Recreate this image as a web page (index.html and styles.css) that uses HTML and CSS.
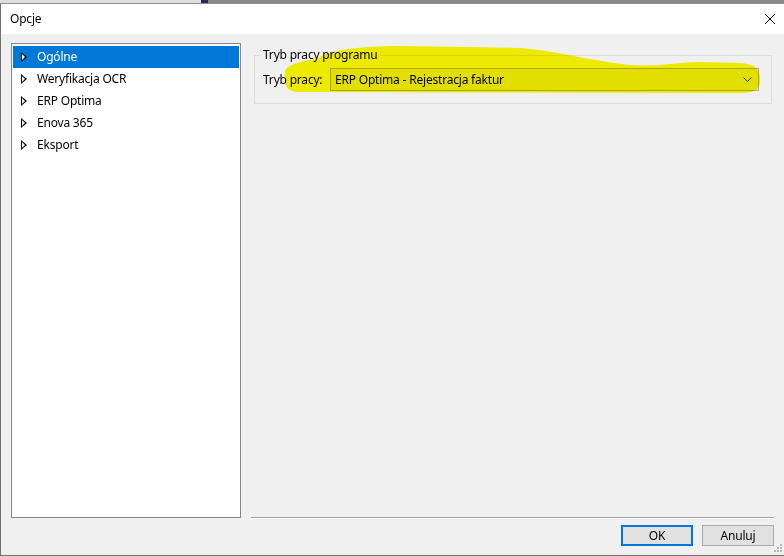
FILE: index.html
```html
<!DOCTYPE html>
<html lang="pl">
<head>
    <meta charset="UTF-8">
    <title>Opcje</title>
    <link rel="stylesheet" href="styles.css">
</head>
<body>
    <div class="desktop-strip">
        <div class="strip-light"></div>
        <div class="strip-dark"></div>
        <div class="strip-gray"></div>
    </div>

    <div class="dialog">
        <div class="titlebar">
            <span class="title">Opcje</span>
            <svg class="close" width="12" height="12" viewBox="0 0 12 12">
                <path d="M1 1 L11 11 M11 1 L1 11" stroke="#000" stroke-width="1" fill="none"/>
            </svg>
        </div>

        <div class="content">
            <div class="main">
                <ul class="tree">
                    <li class="selected"><span class="arrow"></span>Ogólne</li>
                    <li><span class="arrow"></span>Weryfikacja OCR</li>
                    <li><span class="arrow"></span>ERP Optima</li>
                    <li><span class="arrow"></span>Enova 365</li>
                    <li><span class="arrow"></span>Eksport</li>
                </ul>

                <div class="panel">
                    <fieldset class="group">
                        <legend>Tryb pracy programu</legend>
                        <div class="field">
                            <label for="mode">Tryb pracy:</label>
                            <div class="combo" id="mode">
                                <span>ERP Optima - Rejestracja faktur</span>
                                <svg width="9" height="6" viewBox="0 0 9 6">
                                    <path d="M0.5 0.5 L4.5 4.5 L8.5 0.5" stroke="#333" stroke-width="1" fill="none"/>
                                </svg>
                            </div>
                        </div>
                    </fieldset>
                    <div class="separator"></div>
                </div>
            </div>

            <div class="buttons">
                <button class="default">OK</button>
                <button>Anuluj</button>
            </div>
        </div>
    </div>

    <!-- grip -->
    <svg class="grip" width="9" height="9" viewBox="0 0 9 9">
        <g fill="#b8b8b8">
            <rect x="6" y="0" width="2" height="2"/>
            <rect x="3" y="3" width="2" height="2"/>
            <rect x="6" y="3" width="2" height="2"/>
            <rect x="0" y="6" width="2" height="2"/>
            <rect x="3" y="6" width="2" height="2"/>
            <rect x="6" y="6" width="2" height="2"/>
        </g>
    </svg>

    <!-- yellow marker drawn over the screenshot -->
    <svg class="marker" width="784" height="556" viewBox="0 0 784 556">
        <path d="M285 72 C285 65 300 62 318 58 C330 50 360 46 400 46 L520 48 C560 51 590 61 630 65 C660 67 680 62 700 62 L740 63 C754 64 760 68 760 79 C760 90 755 93 740 93 L300 92 C289 92 285 88 285 81 Z" fill="rgb(252,248,0)"/>
    </svg>
</body>
</html>
```

FILE: styles.css
```css
* {
    box-sizing: border-box;
}
html, body {
    margin: 0;
    width: 784px;
    height: 556px;
    overflow: hidden;
}
body {
    position: relative;
    font-family: "Noto Sans", "Open Sans", sans-serif;
    font-size: 12px;
    letter-spacing: -0.2px;
    color: #000;
    background: #dcdcdc;
}
.desktop-strip {
    display: flex;
    height: 3px;
}
.strip-light {
    width: 201px;
    background: #dedede;
}
.strip-dark {
    width: 7px;
    background: #1f2d4f;
}
.strip-gray {
    flex: 1;
    background: #8a8a8a;
}
.dialog {
    height: 553px;
    border-top: 1px solid #8f8f8f;
    border-left: 1px solid #707070;
    border-bottom: 1px solid #707070;
    background: #f0f0f0;
}
.titlebar {
    height: 30px;
    background: #fff;
    display: flex;
    align-items: center;
    justify-content: space-between;
    padding: 0 8px 0 9px;
}
.title {
    line-height: 16px;
}
.close {
    display: block;
}
.content {
    padding: 9px 0 0 10px;
}
.main {
    display: flex;
    height: 476px;
}
.tree {
    list-style: none;
    margin: 0;
    padding: 2px 1px;
    width: 230px;
    height: 475px;
    background: #fff;
    border: 1px solid #828790;
}
.tree li {
    height: 22px;
    display: flex;
    align-items: center;
    padding-left: 8px;
    line-height: 16px;
}
.tree li.selected {
    background: #0078d7;
    color: #fff;
}
.arrow {
    width: 6px;
    height: 10px;
    margin-right: 10px;
    background: #000;
    clip-path: polygon(0 0, 100% 50%, 0 100%);
    position: relative;
}
.arrow::after {
    content: "";
    position: absolute;
    left: 1px;
    top: 2px;
    width: 3px;
    height: 6px;
    background: #fff;
    clip-path: polygon(0 0, 100% 50%, 0 100%);
}
.panel {
    flex: 1;
    display: flex;
    flex-direction: column;
    padding: 0 10px;
}
.group {
    margin: 4px 2px 0 3px;
    padding: 5px 12px 12px 8px;
    border: 1px solid #dcdcdc;
    min-width: 0;
}
.group legend {
    padding: 0 2px;
    margin-left: -2px;
    line-height: 16px;
}
.field {
    display: flex;
    align-items: center;
}
.field label {
    width: 67px;
    flex: none;
}
.combo {
    flex: 1;
    height: 23px;
    display: flex;
    align-items: center;
    justify-content: space-between;
    padding: 0 6px 0 4px;
    background: #e5e5e5;
    border: 1px solid #acacac;
}
.separator {
    margin-top: auto;
    height: 2px;
    border-top: 1px solid #a0a0a0;
    border-bottom: 1px solid #fff;
}
.buttons {
    display: flex;
    justify-content: flex-end;
    gap: 9px;
    padding-right: 10px;
    margin-top: 6px;
}
.buttons button {
    width: 72px;
    height: 21px;
    font-family: inherit;
    font-size: 12px;
    letter-spacing: inherit;
    color: #000;
    background: #e1e1e1;
    border: 1px solid #adadad;
    padding: 0;
}
.buttons button.default {
    border: 2px solid #0078d7;
}
.grip {
    position: absolute;
    right: 1px;
    bottom: 3px;
}
.marker {
    position: absolute;
    left: 0;
    top: 0;
    mix-blend-mode: multiply;
    pointer-events: none;
}
```
